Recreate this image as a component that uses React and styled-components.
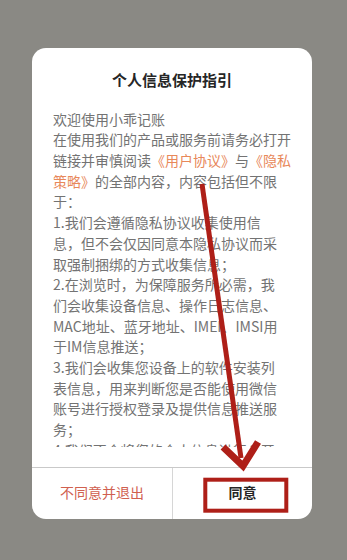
import React from "react";
import styled, { createGlobalStyle } from "styled-components";

const Global = createGlobalStyle`
  html, body { margin: 0; padding: 0; }
  body {
    background: #8a8984;
    font-family: "Noto Sans CJK SC", "Noto Sans", sans-serif;
  }
`;

const Screen = styled.div`
  position: relative;
  width: 347px;
  height: 560px;
  overflow: hidden;
  background: #8a8984;
  padding-top: 48px;
  box-sizing: border-box;
`;

const Dialog = styled.div`
  width: 280px;
  margin-left: 32px;
  background: #ffffff;
  border-radius: 14px;
  display: flex;
  flex-direction: column;
  overflow: hidden;
`;

const Title = styled.h1`
  margin: 0;
  padding-top: 21px;
  font-size: 15px;
  line-height: 22px;
  font-weight: 700;
  color: #262626;
  text-align: center;
`;

const Body = styled.div`
  margin: 17.6px 21px 20px;
  height: 338px;
  overflow: hidden;
  font-size: 14px;
  line-height: 20.7px;
  color: #737373;
`;

const Line = styled.div`
  white-space: nowrap;
`;

const Link = styled.span`
  color: #e8885a;
`;

const Actions = styled.div`
  display: grid;
  grid-template-columns: 1fr 1fr;
  border-top: 1px solid #c9c9c9;
  height: 51px;
`;

const Action = styled.button`
  border: none;
  background: transparent;
  font-family: inherit;
  font-size: 14px;
  font-weight: ${(p) => (p.$primary ? 700 : 400)};
  color: ${(p) => (p.$primary ? "#262626" : "#d0604f")};
  border-left: ${(p) => (p.$primary ? "1px solid #d6d6d6" : "none")};
  padding: 0 0 2px;
  cursor: pointer;
`;

const Overlay = styled.svg`
  position: absolute;
  left: 0;
  top: 0;
  pointer-events: none;
`;

const lines = [
  ["欢迎使用小乖记账"],
  ["在使用我们的产品或服务前请务必打开"],
  ["链接并审慎阅读", { link: "《用户协议》" }, "与", { link: "《隐私" }],
  [{ link: "策略》" }, "的全部内容，内容包括但不限"],
  ["于："],
  ["1.我们会遵循隐私协议收集使用信"],
  ["息，但不会仅因同意本隐私协议而采"],
  ["取强制捆绑的方式收集信息；"],
  ["2.在浏览时，为保障服务所必需，我"],
  ["们会收集设备信息、操作日志信息、"],
  ["MAC地址、蓝牙地址、IMEI、IMSI用"],
  ["于IM信息推送；"],
  ["3.我们会收集您设备上的软件安装列"],
  ["表信息，用来判断您是否能使用微信"],
  ["账号进行授权登录及提供信息推送服"],
  ["务；"],
  ["4.我们不会将您的个人信息进行公开"],
  ["披露。"],
];

export default function App() {
  return (
    <>
      <Global />
      <Screen>
        <Dialog>
          <Title>个人信息保护指引</Title>
          <Body>
            {lines.map((parts, i) => (
              <Line key={i}>
                {parts.map((p, j) =>
                  typeof p === "string" ? (
                    <React.Fragment key={j}>{p}</React.Fragment>
                  ) : (
                    <Link key={j}>{p.link}</Link>
                  )
                )}
              </Line>
            ))}
          </Body>
          <Actions>
            <Action>不同意并退出</Action>
            <Action $primary>同意</Action>
          </Actions>
        </Dialog>
        <Overlay width="347" height="560" viewBox="0 0 347 560">
          <g stroke="#ae1f18" fill="none" strokeLinecap="butt">
            <line x1="202" y1="184" x2="241" y2="458" strokeWidth="5" />
            <polyline
              points="223,447 243,466 258,442"
              strokeWidth="7"
              strokeLinejoin="miter"
            />
            <rect x="205.3" y="479.7" width="81" height="31" strokeWidth="4" />
          </g>
        </Overlay>
      </Screen>
    </>
  );
}
